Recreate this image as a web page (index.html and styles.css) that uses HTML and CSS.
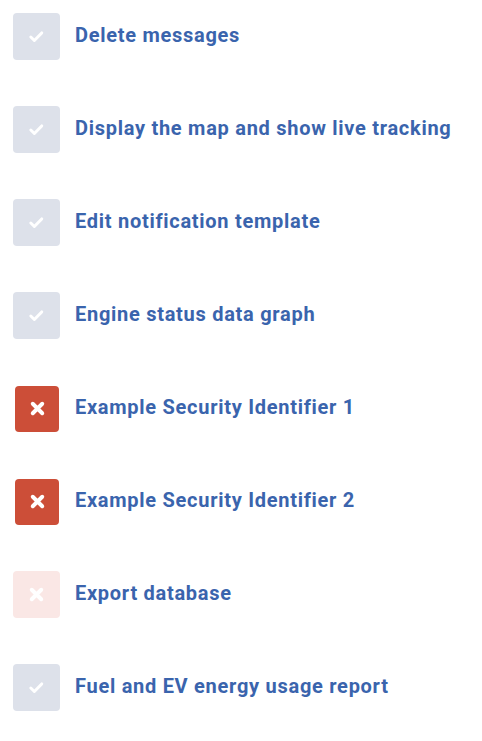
FILE: index.html
```html
<!DOCTYPE html>
<html lang="en">
<head>
    <meta charset="UTF-8">
    <meta name="viewport" content="width=device-width, initial-scale=1.0">
    <title>Permissions</title>
    <link rel="stylesheet" href="styles.css">
</head>
<body>
    <ul class="perm-list">
        <li class="perm">
            <span class="box box-on"><svg viewBox="0 0 16 16"><path d="M3.2 8.4l3 3 6.2-6.4"/></svg></span>
            <span class="perm-name">Delete messages</span>
        </li>
        <li class="perm">
            <span class="box box-on"><svg viewBox="0 0 16 16"><path d="M3.2 8.4l3 3 6.2-6.4"/></svg></span>
            <span class="perm-name">Display the map and show live tracking</span>
        </li>
        <li class="perm">
            <span class="box box-on"><svg viewBox="0 0 16 16"><path d="M3.2 8.4l3 3 6.2-6.4"/></svg></span>
            <span class="perm-name">Edit notification template</span>
        </li>
        <li class="perm">
            <span class="box box-on"><svg viewBox="0 0 16 16"><path d="M3.2 8.4l3 3 6.2-6.4"/></svg></span>
            <span class="perm-name">Engine status data graph</span>
        </li>
        <li class="perm">
            <span class="box box-deny"><svg viewBox="0 0 16 16"><path d="M4 4l8 8M12 4l-8 8"/></svg></span>
            <span class="perm-name">Example Security Identifier 1</span>
        </li>
        <li class="perm">
            <span class="box box-deny"><svg viewBox="0 0 16 16"><path d="M4 4l8 8M12 4l-8 8"/></svg></span>
            <span class="perm-name">Example Security Identifier 2</span>
        </li>
        <li class="perm">
            <span class="box box-deny-off"><svg viewBox="0 0 16 16"><path d="M4 4l8 8M12 4l-8 8"/></svg></span>
            <span class="perm-name">Export database</span>
        </li>
        <li class="perm">
            <span class="box box-on"><svg viewBox="0 0 16 16"><path d="M3.2 8.4l3 3 6.2-6.4"/></svg></span>
            <span class="perm-name">Fuel and EV energy usage report</span>
        </li>
    </ul>
</body>
</html>
```
FILE: styles.css
```css
body {
    margin: 0;
    background: #fff;
    font-family: 'Roboto', 'Liberation Sans', sans-serif;
}

.perm-list {
    list-style: none;
    margin: 0;
    padding: 13px 0 0 13px;
}

.perm {
    display: flex;
    align-items: center;
    height: 47px;
    margin-bottom: 46px;
}

.box {
    width: 47px;
    height: 47px;
    border-radius: 4px;
    display: flex;
    align-items: center;
    justify-content: center;
    flex-shrink: 0;
}

.box svg {
    width: 19px;
    height: 19px;
    fill: none;
    stroke: #fff;
    stroke-width: 3.3;
    stroke-linecap: round;
    stroke-linejoin: round;
}

.box-on {
    background-color: #dde1ea;
}

.box-on svg {
    stroke-width: 2.5;
}

.box-deny {
    background-color: #cc4e38;
    width: 44px;
    height: 46px;
    margin-left: 2px;
    margin-right: 1px;
}

.box-deny-off {
    background-color: #fae7e5;
}

.perm-name {
    margin-left: 15px;
    padding-bottom: 3px;
    font-size: 20px;
    font-weight: 700;
    color: #3a64ad;
    letter-spacing: 0.72px;
}
```
